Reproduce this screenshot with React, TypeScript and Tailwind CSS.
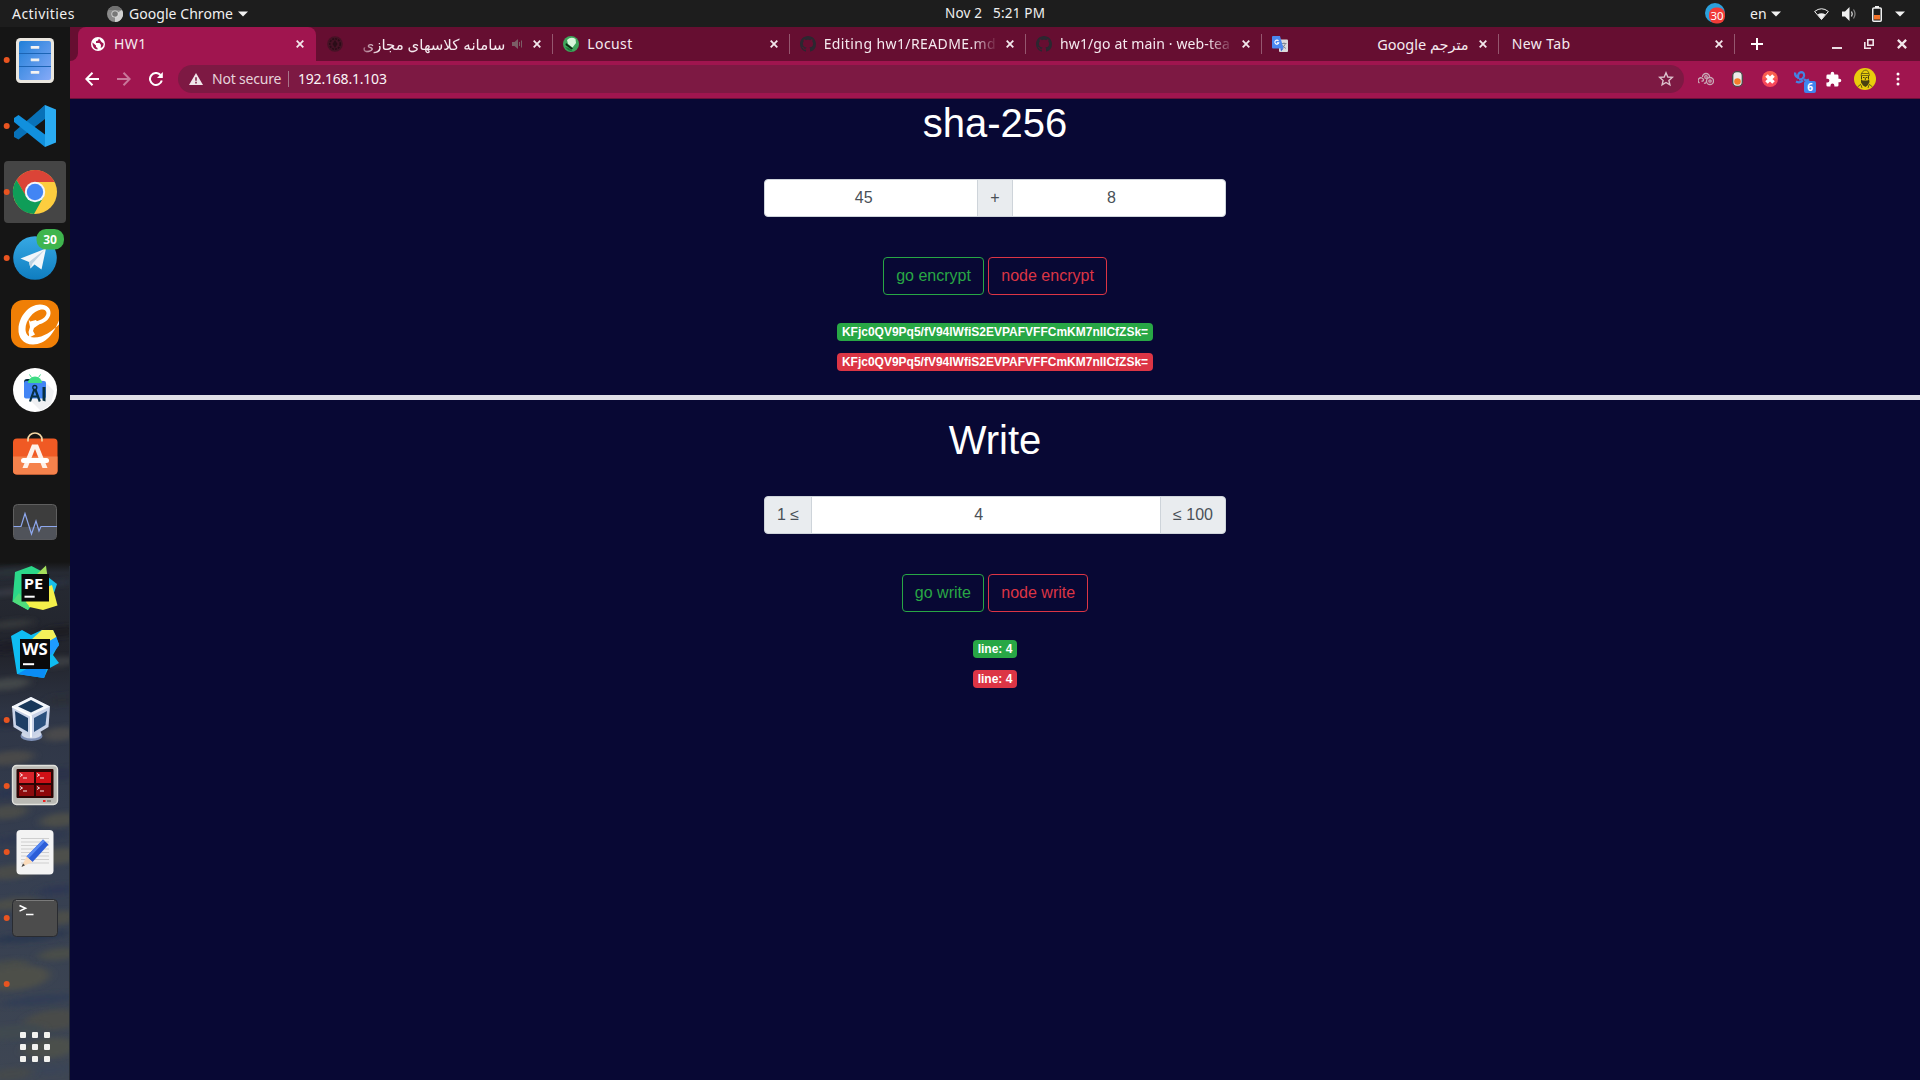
import React from "react";

const UI = "font-['Noto_Sans','DejaVu_Sans',sans-serif]";

/* ---------- shared glyphs ---------- */

function Caret({ className = "" }: { className?: string }) {
  return (
    <svg className={`block shrink-0 ${className}`} width="10" height="6" viewBox="0 0 10 6">
      <path d="M0 .5h10L5 5.5z" fill="#f2f2f2" />
    </svg>
  );
}

function Cross({ size = 8, className = "" }: { size?: number; className?: string }) {
  return (
    <svg className={`block shrink-0 ${className}`} width={size} height={size} viewBox="0 0 8 8">
      <path d="M.7.7l6.600 6.600M7.300.7L.7 7.300" stroke="#f3e7ec" strokeWidth="1.8" fill="none" />
    </svg>
  );
}

/* ---------- top bar ---------- */

function TopBar() {
  return (
    <header className={`flex h-[27px] w-full shrink-0 items-center bg-[#1d1d1d] text-[14px] leading-[27px] text-[#f0f0f0] ${UI}`}>
      <div className="flex w-[640px] items-center pl-3">
        <span className="w-[95px] whitespace-nowrap tracking-[0.45px]">Activities</span>
        <svg className="block" width="16" height="16" viewBox="0 0 16 16">
          <circle cx="8" cy="8" r="8" fill="#8a8a8a" />
          <path d="M8 8l7-4a8 8 0 01-7 12z" fill="#d0d0d0" />
          <path d="M1.2 4A8 8 0 0115 4H8z" fill="#6f6f6f" />
          <circle cx="8" cy="8" r="3.6" fill="#dcdcdc" />
          <circle cx="8" cy="8" r="2.8" fill="#777" />
        </svg>
        <span className="ml-1.5 w-[109px] whitespace-nowrap tracking-[0.05px]">Google Chrome</span>
        <Caret />
      </div>
      <div className="flex w-[710px] justify-center text-[13.5px]">
        <span className="w-[48px] whitespace-nowrap tracking-[0.15px]">Nov 2</span>
        <span className="w-[52px] whitespace-nowrap tracking-[0.2px]">5:21 PM</span>
      </div>
      <div className="flex flex-1 items-center pl-[355px]">
        <svg className="block" width="20" height="22" viewBox="0 0 20 22">
          <circle cx="10" cy="10" r="10" fill="#2ba0dc" />
          <rect x="4" y="4.500" width="16" height="16" rx="7" fill="#f13b37" />
          <text x="12" y="16.500" textAnchor="middle" fontSize="11.500" fill="#fff" fontFamily="Noto Sans">30</text>
        </svg>
        <span className="ml-[25px] w-[21px]">en</span>
        <Caret />
        <svg className="ml-[33px] block" width="15" height="12" viewBox="0 0 15 12">
          <path d="M.6 3.500Q7.500-2 14.400 3.500L7.500 11.500z" fill="none" stroke="#eee" strokeWidth="1" />
          <path d="M3.500 6.500Q7.500 4 11.500 6.500L7.500 11.500z" fill="#eee" />
        </svg>
        <svg className="ml-[13px] block" width="15" height="14" viewBox="0 0 15 14">
          <path d="M0 4.500h3L7.500 0v14L3 9.500H0z" fill="#f0f0f0" />
          <path d="M9.500 4.500q1.500 2.500 0 5" stroke="#e0e0e0" strokeWidth="1.300" fill="none" />
          <path d="M11.500 2.500q3 4.500 0 9" stroke="#888" strokeWidth="1.200" fill="none" />
        </svg>
        <svg className="ml-[15px] block" width="10" height="16" viewBox="0 0 10 16">
          <path d="M3 0h4v2H3z" fill="#f0f0f0" />
          <rect x=".75" y="2" width="8.500" height="13.250" rx="1" fill="none" stroke="#f0f0f0" strokeWidth="1.500" />
          <path d="M2 9h6v4.500H2z" fill="#f37329" />
        </svg>
        <Caret className="ml-[13px]" />
      </div>
    </header>
  );
}

/* ---------- dock ---------- */

function FilesIcon() {
  return (
    <>
      <rect x="16" y="11" width="38" height="45" rx="4.500" fill="#e9e6df" />
      <rect x="19" y="14" width="32" height="39" rx="2" fill="url(#drawer)" />
      <path d="M19 26.500h32M19 39.500h32" stroke="#1c64b4" strokeWidth="1.200" />
      {[19, 31.5, 44].map((y) => (
        <path key={y} d={`M31 ${y}v2.500h8v-2.500`} fill="#f4f4f4" stroke="#e8e8e8" strokeWidth=".6" />
      ))}
    </>
  );
}

function CodeIcon() {
  return (
    <>
      <path d="M14.500 42.500L45 12v12L18.500 45.500z" fill="#0a6cb4" />
      <path d="M14 39v5l4.500 2.500L45 26V12z" fill="#0871b8" />
      <path d="M18.500 22L14 25v4l31 25V41.500z" fill="#1190dd" />
      <path d="M45 12l11 4.500v33L45 54z" fill="#2aabf2" />
    </>
  );
}

function ChromeIcon() {
  return (
    <>
      <rect x="4" y="2" width="62" height="62" rx="4" fill="#454545" />
      <circle cx="35" cy="33" r="22" fill="#fdcd3f" />
      <path d="M16.500 21A22 22 0 0154.500 23H35L26 37.500z" fill="#db4437" />
      <path d="M16.500 21A22 22 0 0034 55L43.500 38 26.500 38z" fill="#0f9d58" />
      <circle cx="35" cy="33" r="10.200" fill="#f4f6fa" />
      <circle cx="35" cy="33" r="8.200" fill="#4285f4" />
    </>
  );
}

function TelegramIcon() {
  return (
    <>
      <circle cx="35" cy="33" r="21.800" fill="url(#tele)" />
      <path d="M20.500 33.500L46 23.500 41.500 44.500 34.500 39.500 30.500 43.500 29 37z" fill="#f2f6fa" />
      <path d="M29 37L45 24.500 32.500 38.500 30.500 43.500z" fill="#bfd3e2" />
      <rect x="36.500" y="4" width="27.500" height="20.500" rx="9.500" fill="#3fb54e" />
      <text x="50" y="18.500" textAnchor="middle" fontSize="12" fontWeight="700" fill="#fff" fontFamily="Open Sans">30</text>
    </>
  );
}

function EitaaIcon() {
  return (
    <>
      <rect x="11" y="9" width="48" height="48" rx="12" fill="#f07f06" />
      <path
        d="M59 29.500C54 42 46 53.500 33 53.500 23 53.500 18 46 18.500 38 19 25 29 13.500 40 13.500c7 0 11 4 10.500 9C50 28.500 44 32.500 37 34l-1-3.500c6-1.500 10-4.500 10.500-8 .3-3-2.500-4.500-5.500-4-8 1.500-15.500 11-15.500 19.500 0 5 3 8.500 8.500 8.500C44 46.500 52 40 59 33.500z"
        fill="#fff"
      />
      <path d="M28.500 28l1.500 2.500 6-1.500 3 4.500-5 3.500-1 3 2 3.500-6.500 3.500q1-4 0-6l1.500-5z" fill="#fff" />
    </>
  );
}

function StudioIcon() {
  return (
    <>
      <circle cx="35" cy="33" r="22" fill="#fff" />
      <path d="M42 22l12 12-3 13-10 7-12-12z" fill="#e8eaed" opacity=".7" />
      <path d="M24 25q0-3 3-3h6v4h-9z" fill="#073042" />
      <rect x="24" y="24" width="22" height="17.500" rx="2" fill="#4285f4" />
      <path d="M28 26a7 6.500 0 0114 0z" fill="#3ddc84" />
      <path d="M29.500 17.500l2 3M40.500 17.500l-2 3" stroke="#3ddc84" strokeWidth="1" />
      <path d="M34.800 31L30 44.500M34.800 31l5 13.500M31 39.500h8" stroke="#073042" strokeWidth="2.200" fill="none" />
      <circle cx="34.800" cy="30.500" r="2" fill="#4285f4" stroke="#073042" strokeWidth="1.300" />
      <path d="M42.500 30h3v14.500l-3-1z" fill="#073042" />
    </>
  );
}

function SoftwareIcon() {
  return (
    <>
      <rect x="13" y="15.500" width="44.500" height="36" rx="4" fill="#f05a24" />
      <path d="M13 33.500h44.500V47.500a4 4 0 01-4 4H17a4 4 0 01-4-4z" fill="#f5824c" />
      <path d="M28 18.500v-2a7 6.500 0 0114 0v2" fill="none" stroke="#f6d7a4" strokeWidth="1.700" />
      <path d="M32 21.500h6l9.500 23.500h-5L35 26 27.500 45h-5z" fill="#fdf1ea" />
      <rect x="21" y="35" width="28" height="5" rx="2.500" fill="#fff" />
    </>
  );
}

function MonitorIcon() {
  return (
    <>
      <rect x="13.500" y="15.500" width="43" height="35" rx="4" fill="#3d3d3d" stroke="#5f5f5f" />
      <path d="M14 38h42v9.500q0 3-3 3H17q-3 0-3-3z" fill="#50535a" />
      <path d="M13.500 37.500H21L25 24.500 31.500 45 36 32l3 10 2-4.500h16" fill="none" stroke="#8ea8ee" strokeWidth="1.200" />
    </>
  );
}

interface BrandProps {
  label: string;
  x: number;
  y: number;
  size: number;
  textWidth: number;
}

function BrandSquare({ label, x, y, size, textWidth }: BrandProps) {
  return (
    <>
      <rect x={x} y={y} width={size} height={size} fill="#0a0a0a" />
      <text x={x + 2.2} y={34} fontSize={size * 0.53} fontWeight="700" fill="#fff" fontFamily="Open Sans" textLength={textWidth} lengthAdjust="spacingAndGlyphs">
        {label}
      </text>
      <path d={`M${x + 3} ${y + size - 4.8}h${size * 0.37}`} stroke="#fff" strokeWidth="2" />
    </>
  );
}

function PycharmIcon() {
  return (
    <>
      <path d="M15 17L31.500 11 43 17 40 40 28 55 12.500 46.500z" fill="#2bd889" />
      <path d="M36 20L46 10.500 47.500 22 40 26z" fill="#a4e05c" />
      <path d="M48 22l9 7-4 12-6-4z" fill="#17bfe8" />
      <path d="M25 47l22-15 5-2 5.500 20.500L43 55 25 51z" fill="#f4f04a" />
      <path d="M12.500 46.500L19 38l10 13-1 4z" fill="#4fdc7c" />
      <BrandSquare label="PE" x={21.5} y={19} size={27.5} textWidth={19.5} />
    </>
  );
}

function WebstormIcon() {
  return (
    <>
      <path d="M11 15L22 9l9 5 11-5h11l6 14-6 11 6 8-11 6-4 9-27-4z" fill="#0fbdf2" />
      <path d="M31 19l11-10h11l3.500 7-10 6z" fill="#f3f05a" />
      <path d="M46 22l10.500-6 2.500 8.500-8 9.500-4-2z" fill="#1e9bff" />
      <path d="M17.500 53L30 46l18-2-4 13z" fill="#0a8cf5" />
      <BrandSquare label="WS" x={20} y={18} size={30} textWidth={25.5} />
    </>
  );
}

function VboxIcon() {
  return (
    <>
      <ellipse cx="31.500" cy="49" rx="11" ry="5" fill="#7f91b8" />
      <ellipse cx="31.500" cy="47" rx="10" ry="4.500" fill="#cfd7e8" />
      <path d="M31 10L50 19.500 48.500 40 31 50.500 13.500 40 12 19.500z" fill="#c9d3e8" />
      <path d="M31 10L50 19.500 31 28.500 12 19.500z" fill="#f2f5fa" />
      <path d="M31 13L43.500 19.500 31 25.500 18 19.500z" fill="#17375a" />
      <path d="M15 24l13 7v14l-12-7z" fill="#1d3e66" />
      <path d="M47 24l-13 7v14l11.500-7z" fill="#2b507c" />
      <path d="M31 28.500v22M12 19.500l19 9.500" stroke="#fff" strokeWidth="1.800" fill="none" />
    </>
  );
}

function TerminatorIcon() {
  const panes: [number, number, string][] = [
    [19, 19, "#d8232a"],
    [36, 19, "#cf1016"],
    [19, 32, "#8d0b0e"],
    [36, 32, "#8d0709"],
  ];
  return (
    <>
      <rect x="12.500" y="12.500" width="45" height="39" rx="4" fill="#b9b9b4" stroke="#e1e1dc" strokeWidth="1.400" />
      <rect x="16.500" y="16" width="37" height="29" rx="1" fill="#2b0505" />
      {panes.map(([x, y, c]) => (
        <g key={`${x}-${y}`}>
          <rect x={x} y={y} width="15" height="11" fill={c} />
          <path d={`M${x + 1} ${y + 1.5}l2.500 1.500-2.500 1.500M${x + 4} ${y + 6}h4`} stroke="#fff" strokeWidth=".9" fill="none" />
        </g>
      ))}
      <rect x="43" y="47" width="2.500" height="2" fill="#f02020" />
      <rect x="47" y="47" width="4" height="2" fill="#858580" />
    </>
  );
}

function EditorIcon() {
  return (
    <>
      <rect x="16.500" y="11" width="37" height="44.500" rx="4" fill="#f3f3f3" />
      <path d="M21 19.500h28M21 23h28M21 26.500h28M21 30h28M21 33.500h28M21 37h28M21 40.500h28M21 44h28" stroke="#cfcfcf" strokeWidth="1" />
      <path d="M43 20.500l5.500 5L32.500 43l-6-5.500z" fill="#2c5ed8" />
      <path d="M43 20.500l2 1.800L28.500 39.500l-2-2z" fill="#5587f2" />
      <path d="M26.500 37.500l6 5.500L21.500 48z" fill="#fbdcbc" />
      <path d="M23 44.500l2 1.800-3.500 1.700z" fill="#444" />
    </>
  );
}

function TerminalIcon() {
  return (
    <>
      <rect x="12.500" y="14.500" width="45" height="37" rx="4" fill="#4c4c4c" stroke="#292b30" />
      <path d="M16 15.500h38" stroke="#7a7a7a" strokeWidth="1" />
      <path d="M19.500 20.500l6 2.800-6 2.800M26 29.500h7.500" stroke="#fff" strokeWidth="1.600" fill="none" />
    </>
  );
}

const DOCK: { name: string; running: boolean; art: React.ReactNode }[] = [
  { name: "files", running: true, art: <FilesIcon /> },
  { name: "code", running: true, art: <CodeIcon /> },
  { name: "chrome", running: true, art: <ChromeIcon /> },
  { name: "telegram", running: true, art: <TelegramIcon /> },
  { name: "eitaa", running: false, art: <EitaaIcon /> },
  { name: "studio", running: false, art: <StudioIcon /> },
  { name: "software", running: false, art: <SoftwareIcon /> },
  { name: "monitor", running: false, art: <MonitorIcon /> },
  { name: "pycharm", running: false, art: <PycharmIcon /> },
  { name: "webstorm", running: false, art: <WebstormIcon /> },
  { name: "vbox", running: true, art: <VboxIcon /> },
  { name: "terminator", running: true, art: <TerminatorIcon /> },
  { name: "editor", running: true, art: <EditorIcon /> },
  { name: "terminal", running: true, art: <TerminalIcon /> },
  { name: "blank", running: true, art: null },
];

/* streaks of the wallpaper that show through the translucent dock: x, y, rx, ry, colour */
const STREAKS: [number, number, number, number, string][] = [
  [10, 10, 30, 4, "#2b3038"], [10, 30, 30, 3, "#373b44"], [50, 22, 26, 3, "#2c3040"], [12, 62, 22, 4, "#35383a"],
  [60, 70, 20, 6, "#1c1e24"], [20, 84, 34, 6, "#1b1e26"], [58, 100, 20, 5, "#3a3e42"], [8, 122, 22, 6, "#434649"],
  [62, 138, 16, 5, "#292d39"], [12, 160, 20, 5, "#252b3c"], [60, 172, 18, 7, "#484a4b"], [10, 196, 24, 7, "#484a4a"],
  [62, 212, 18, 6, "#29324a"], [20, 230, 30, 5, "#2c3650"], [8, 250, 20, 7, "#4a4b49"], [60, 258, 20, 7, "#4c4e4a"],
  [30, 276, 40, 5, "#2e3850"], [60, 294, 22, 8, "#4e504b"], [12, 310, 26, 7, "#484b48"], [58, 328, 20, 5, "#2d3852"],
  [14, 342, 26, 6, "#4c4e49"], [58, 356, 22, 7, "#4b4e4a"], [30, 375, 40, 5, "#2c3750"], [60, 392, 22, 6, "#4a4d4a"],
  [8, 404, 22, 6, "#474b49"], [16, 416, 34, 12, "#4d4f4a"], [40, 438, 40, 5, "#333e54"], [54, 458, 30, 10, "#494c4a"],
  [14, 470, 30, 7, "#414950"], [50, 486, 28, 10, "#4c4f4b"], [50, 508, 30, 5, "#3a4457"], [12, 512, 22, 6, "#454a4c"],
];

function Dock() {
  return (
    <aside className="relative flex h-full w-[70px] shrink-0 flex-col bg-[#151515]">
      <svg className="absolute bottom-0 left-0" width="70" height="518" viewBox="0 0 70 518">
        <defs>
          <linearGradient id="sea" x1="0" y1="0" x2="0" y2="1">
            <stop offset="0" stopColor="#151515" />
            <stop offset=".02" stopColor="#262a33" />
            <stop offset=".18" stopColor="#22242c" />
            <stop offset=".3" stopColor="#2f3646" />
            <stop offset=".6" stopColor="#363f51" />
            <stop offset="1" stopColor="#3e4653" />
          </linearGradient>
          <linearGradient id="drawer" x1="0" y1="0" x2="1" y2="1">
            <stop offset="0" stopColor="#1f7fd8" />
            <stop offset="1" stopColor="#86aaf8" />
          </linearGradient>
          <linearGradient id="tele" x1="0" y1="0" x2="0" y2="1">
            <stop offset="0" stopColor="#37a9e4" />
            <stop offset="1" stopColor="#0f7dc0" />
          </linearGradient>
          <filter id="soft" x="-30%" y="-80%" width="160%" height="260%">
            <feGaussianBlur stdDeviation="5 2.500" />
          </filter>
        </defs>
        <rect width="70" height="518" fill="url(#sea)" />
        {STREAKS.map(([x, y, rx, ry, c], i) => (
          <ellipse key={i} cx={x} cy={y} rx={rx} ry={ry} fill={c} filter="url(#soft)" transform={`rotate(-6 ${x} ${y})`} />
        ))}
        <path d="M69.500 4v514" stroke="#252b36" />
      </svg>
      {DOCK.map((item) => (
        <svg key={item.name} className="relative block shrink-0" width="70" height="66" viewBox="0 0 70 66">
          {item.art}
          {item.running && <circle cx="6.700" cy="33" r="3" fill="#e95420" />}
        </svg>
      ))}
      <div className="relative mt-[15px] ml-5 grid w-[30px] grid-cols-3 gap-1.5">
        {Array.from({ length: 9 }, (_, i) => (
          <i key={i} className="block size-1.5 rounded-[1px] bg-[#f2f2ef]" />
        ))}
      </div>
    </aside>
  );
}

/* ---------- browser chrome ---------- */

function Globe() {
  return (
    <svg width="14" height="14" viewBox="0 0 14 14">
      <circle cx="7" cy="7" r="7" fill="#fff" />
      <path d="M1.500 5.500l3.500 3v1.500l1.500 1v1.500Q2 12 1.500 7zM8 1.500L7 3.500l-2 .8v1.700h3.500L10 8l-.3 3q3-1.500 2.900-4.500L10.500 5z" fill="#a0154f" />
    </svg>
  );
}

function Seal() {
  return (
    <svg width="16" height="16" viewBox="0 0 16 16">
      <circle cx="8" cy="8" r="7.800" fill="#451225" />
      <circle cx="8" cy="8" r="5.200" fill="none" stroke="#2b0d18" strokeWidth="1.600" strokeDasharray="2 1" />
      <path d="M8 4l2.500 4L8 12 5.500 8z" fill="#2b0d18" />
    </svg>
  );
}

function LocustMark() {
  return (
    <svg width="16" height="16" viewBox="0 0 16 16">
      <circle cx="8" cy="8" r="8" fill="#3fa55b" />
      <path d="M4 4Q8 0 12.500 3l.5 4-3.500 4.500L5 8z" fill="#d9f7dc" />
      <path d="M3 7l7 5.500-1.500 1L2.500 9z" fill="#0b2713" />
      <path d="M2 11q3 4 8 4.500L6 12z" fill="#1c7a3c" />
    </svg>
  );
}

function Octocat() {
  return (
    <svg width="16" height="16" viewBox="0 0 16 16">
      <path
        fill="#2b2730"
        d="M8 0C3.580 0 0 3.580 0 8c0 3.540 2.290 6.530 5.470 7.590.4.070.55-.17.55-.38 0-.19-.01-.82-.01-1.490-2.010.37-2.530-.49-2.690-.94-.09-.23-.48-.94-.82-1.130-.28-.15-.68-.52-.01-.53.63-.01 1.080.58 1.230.82.72 1.210 1.870.87 2.330.66.070-.52.280-.87.510-1.070-1.780-.2-3.640-.89-3.640-3.950 0-.87.310-1.590.820-2.150-.08-.2-.36-1.020.080-2.120 0 0 .67-.21 2.200.82.64-.18 1.320-.27 2-.27s1.360.09 2 .27c1.530-1.040 2.200-.82 2.200-.82.440 1.100.160 1.920.080 2.120.510.560.820 1.270.820 2.150 0 3.070-1.870 3.750-3.650 3.950.290.250.540.730.540 1.480 0 1.070-.01 1.930-.01 2.200 0 .21.15.46.55.38A8.010 8.010 0 0016 8c0-4.420-3.580-8-8-8z"
      />
    </svg>
  );
}

function TranslateMark() {
  return (
    <svg width="16" height="16" viewBox="0 0 16 16">
      <rect x="7" y="3.500" width="9" height="12.500" rx="1" fill="#dcdcdc" />
      <path d="M9.500 7.500h5M12 6.500v1M13.500 7.500q-1 3.500-4 5M10.500 9q1 2.500 3.500 3.500" stroke="#7b8590" strokeWidth=".9" fill="none" />
      <path d="M1 0h7l3.500 12.500H1a1 1 0 01-1-1V1a1 1 0 011-1z" fill="#4a88f0" />
      <path d="M6.500 5a2 2 0 10.300 1.700H5" stroke="#fff" strokeWidth="1.100" fill="none" />
      <path d="M8.500 12.500h3L9 15.500z" fill="#3367d6" />
    </svg>
  );
}

interface TabProps {
  title: string;
  icon?: React.ReactNode;
  active?: boolean;
  rtl?: boolean;
  fade?: "left" | "right";
  muted?: boolean;
  text?: string;
}

function Tab({ title, icon, active, rtl, fade, muted, text = "tracking-[0.4px]" }: TabProps) {
  return (
    <div
      className={`relative flex h-full shrink-0 items-center pr-3 ${
        active ? "mr-px w-[238px] rounded-t-lg bg-[#a0154f] pl-[13px]" : "w-[236.33px] pl-[10px]"
      }`}
    >
      {icon && <span className={`flex w-4 shrink-0 ${active ? "mr-[7px]" : "mr-2"}`}>{icon}</span>}
      <span
        dir={rtl ? "rtl" : "ltr"}
        className={`min-w-0 flex-1 whitespace-nowrap ${icon ? "" : "pl-[3px]"} ${text} ${
          fade === "left"
            ? "[mask-image:linear-gradient(to_right,transparent,black_28px)]"
            : fade === "right"
              ? "[mask-image:linear-gradient(to_left,transparent,black_26px)]"
              : ""
        }`}
      >
        {title}
      </span>
      {muted && (
        <svg className="ml-[7px] block shrink-0" width="11" height="10" viewBox="0 0 11 10">
          <path d="M0 3h2.500L6 0v10L2.500 7H0z" fill="#7b5e66" />
          <path d="M7.500 3v4M9.500 1.500v7" stroke="#7b5e66" strokeWidth="1" />
        </svg>
      )}
      <Cross className={rtl ? "ml-2.5" : "ml-2"} />
      {!active && <i className="absolute top-[7px] right-0 block h-5 w-px bg-[#95576f]" />}
    </div>
  );
}

function TabStrip() {
  return (
    <div className={`flex h-[34px] w-full shrink-0 bg-[#660e31] text-[14px] leading-[20px] text-[#f5eaef] ${UI}`}>
      <div className="flex w-2 shrink-0 items-end">
        <i className="block h-2 w-2 bg-[#a0154f]">
          <i className="block h-2 w-2 rounded-br-lg bg-[#660e31]" />
        </i>
      </div>
      <Tab title="HW1" icon={<Globe />} active />
      <Tab title="سامانه کلاسهای مجازی" icon={<Seal />} rtl fade="left" muted text="text-[15px]" />
      <Tab title="Locust" icon={<LocustMark />} />
      <Tab title="Editing hw1/README.md" icon={<Octocat />} fade="right" />
      <Tab title="hw1/go at main · web-tea" icon={<Octocat />} fade="right" text="tracking-[0.12px]" />
      <Tab title="مترجم Google" icon={<TranslateMark />} rtl text="text-[14.5px]" />
      <Tab title="New Tab" />
      <div className="flex flex-1 items-center pl-[16px]">
        <svg className="block" width="12" height="12" viewBox="0 0 12 12">
          <path d="M6 0v12M0 6h12" stroke="#fff" strokeWidth="2" />
        </svg>
        <svg className="ml-[69px] block" width="10" height="12" viewBox="0 0 10 12">
          <path d="M0 10h10" stroke="#eadde3" strokeWidth="2" />
        </svg>
        <svg className="ml-[22px] block" width="10" height="10" viewBox="0 0 10 10">
          <path d="M3.800.8h5.400v5.400H3.800z" fill="none" stroke="#f0e4e9" strokeWidth="1.600" />
          <path d="M.8 3v6.200H7" fill="none" stroke="#f0e4e9" strokeWidth="1.600" />
        </svg>
        <Cross size={10} className="ml-[23px]" />
      </div>
    </div>
  );
}

function Extensions() {
  return (
    <div className="flex items-center">
      <svg className="ml-[14px] block" width="16" height="14" viewBox="0 0 16 14">
        <g fill="none" stroke="#c9a9b6" strokeWidth="1.300">
          <path d="M1.500 11a2.800 2.800 0 114-3.500q0 2-2 1.500" />
          <path d="M4.500 5a3.500 3.500 0 117 0" />
          <circle cx="8" cy="5" r="1.300" />
          <circle cx="12" cy="9" r="3.500" />
          <circle cx="12" cy="9" r="1.200" />
          <path d="M6 11q2 1 2.500-2" />
        </g>
      </svg>
      <svg className="ml-[18px] block" width="11" height="16" viewBox="0 0 11 16">
        <rect x=".7" y=".7" width="9.600" height="14.600" rx="4" fill="#ececea" stroke="#4a4a48" strokeWidth="1.300" />
        <circle cx="5.500" cy="10.500" r="3.300" fill="#f57c2b" />
      </svg>
      <svg className="ml-[19px] block" width="16" height="16" viewBox="0 0 16 16">
        <circle cx="8" cy="8" r="8" fill="#f8485a" />
        <path d="M1 4.500A8 8 0 0115 4.500V8H1z" fill="#fb6a48" opacity=".7" />
        <path d="M4.500 4.500l7 7M11.500 4.500l-7 7" stroke="#fff" strokeWidth="3.600" />
      </svg>
      <div className="relative ml-4 h-4 w-4">
        <svg className="block" width="16" height="14" viewBox="0 0 16 14">
          <path d="M4.500 6.500Q.5 5.500 1.200 1.500M4.500 8Q3 2 7 1.200q3.500 0 3 4Q9 8.500 5 8.500M2 10.500q4 2 7-1M10 8q2 2.500 5 .5" fill="none" stroke="#4384e4" strokeWidth="2.200" />
        </svg>
        <span className={`absolute top-[10px] left-[10px] flex h-3 w-3 items-center justify-center rounded-[2px] bg-[#3f85ee] text-[10px] leading-3 font-bold text-white ${UI}`}>6</span>
      </div>
      <svg className="ml-[15px] block" width="17" height="17" viewBox="0 0 24 24">
        <path fill="#fff" d="M20.500 11H19V7a2 2 0 00-2-2h-4V3.500a2.500 2.500 0 00-5 0V5H4a2 2 0 00-2 2v3.800h1.500a2.700 2.700 0 010 5.400H2V20a2 2 0 002 2h3.800v-1.500a2.700 2.700 0 015.400 0V22H17a2 2 0 002-2v-4h1.500a2.500 2.500 0 000-5z" />
      </svg>
      <svg className="ml-[12px] block" width="22" height="22" viewBox="0 0 22 22">
        <circle cx="11" cy="11" r="11" fill="#e8cd0c" />
        <path d="M7 7.500Q8 2 12.500 2q2.500 1.500 3 5.500zM7 5.500h8" fill="none" stroke="#6b6010" strokeWidth=".9" />
        <path d="M7.500 8v3M14.500 8v3M9 9.500h1.500M12 9.500h1.500M11.300 9.500v2.500" stroke="#4a4210" strokeWidth="1" />
        <path d="M7 11l1.500 1.500h5L15 11l.5 3-1.500 3-2.500 2-2.500-1.500L7 14.500z" fill="#4a4210" />
        <path d="M3.500 19l3.500-3M18.500 19l-3.500-3M8 20l-1-3M14 20l1-3" stroke="#6b6010" strokeWidth="1" />
      </svg>
      <svg className="ml-5 block" width="4" height="14" viewBox="0 0 4 14">
        <circle cx="2" cy="2" r="1.500" fill="#fff" />
        <circle cx="2" cy="7" r="1.500" fill="#fff" />
        <circle cx="2" cy="12" r="1.500" fill="#fff" />
      </svg>
    </div>
  );
}

function Toolbar() {
  return (
    <div className={`flex h-[38px] w-full shrink-0 items-center border-b border-[#6b1038] bg-[#a0154f] pb-px pl-[15px] ${UI}`}>
      <svg className="block" width="14" height="14" viewBox="0 0 14 14">
        <path d="M14 7H1.500M7.500.8L1.300 7l6.200 6.200" fill="none" stroke="#fff" strokeWidth="2" />
      </svg>
      <svg className="ml-[18px] block" width="14" height="14" viewBox="0 0 14 14">
        <path d="M0 7h12.500M6.500.8L12.700 7l-6.200 6.200" fill="none" stroke="#c9779a" strokeWidth="2" />
      </svg>
      <svg className="ml-[18px] block" width="14" height="14" viewBox="0 0 14 14">
        <path d="M11.500 3A6 6 0 1012.800 8.500" fill="none" stroke="#fff" strokeWidth="2" />
        <path d="M13.800 0v6H8z" fill="#fff" />
      </svg>
      <div className="ml-[15px] flex h-7 w-[1506px] items-center rounded-full bg-[#7d1943] pr-[10px] pl-[11px] text-[14px] leading-7">
        <svg className="block" width="14" height="12" viewBox="0 0 14 12">
          <path d="M7 0l7 12H0z" fill="#f1e6ea" />
          <path d="M7 4.200v3.600M7 8.800v1.600" stroke="#7d1943" strokeWidth="1.500" />
        </svg>
        <span className="ml-[9px] w-[76px] whitespace-nowrap text-[#e6d3da] tracking-[-0.2px]">Not secure</span>
        <i className="block h-4 w-px bg-[#a8748a]" />
        <span className="ml-[9px] flex-1 whitespace-nowrap text-[#fbf5f7] tracking-[-0.2px]">192.168.1.103</span>
        <svg className="block" width="16" height="16" viewBox="0 0 16 16">
          <path d="M8 1.800l1.800 4.200 4.500.4-3.400 3 1 4.400L8 11.500l-3.900 2.300 1-4.400-3.400-3 4.500-.4z" fill="none" stroke="#dcc3cd" strokeWidth="1.400" />
        </svg>
      </div>
      <Extensions />
    </div>
  );
}

/* ---------- page ---------- */

const ADDON = "flex items-center justify-center border border-[#ced4da] bg-[#e9ecef] px-3 text-[#495057]";
const FIELD = "min-w-0 border border-[#ced4da] bg-white py-1.5 pr-[27px] pl-3 text-center text-[#495057] outline-none";

function Heading({ children }: { children: string }) {
  return <h1 className="mb-8 text-[40px] leading-[48px] font-normal text-white">{children}</h1>;
}

function Actions({ left, right }: { left: string; right: string }) {
  return (
    <div className="mt-10 flex gap-[4.45px]">
      <button className="h-[38px] rounded border border-[#28a745] px-3 text-[#28a745]">{left}</button>
      <button className="h-[38px] rounded border border-[#dc3545] px-3 text-[#dc3545]">{right}</button>
    </div>
  );
}

function Results({ value }: { value: string }) {
  return (
    <div className="mt-7 flex flex-col items-center gap-3 text-[12px] leading-3 font-bold text-white">
      <span className="h-[18px] rounded bg-[#28a745] px-[4.8px] py-[3px] whitespace-nowrap">{value}</span>
      <span className="h-[18px] rounded bg-[#dc3545] px-[4.8px] py-[3px] whitespace-nowrap">{value}</span>
    </div>
  );
}

function Page() {
  return (
    <main className="flex w-full flex-1 flex-col items-center bg-[#080834] font-['Liberation_Sans',Arial,sans-serif] text-[16px] leading-6">
      <Heading>sha-256</Heading>
      <div className="flex h-[38px] w-[462px]">
        <input className={`${FIELD} flex-1 rounded-l`} defaultValue="45" />
        <span className={`${ADDON} -mx-px`}>+</span>
        <input className={`${FIELD} flex-1 rounded-r`} defaultValue="8" />
      </div>
      <Actions left="go encrypt" right="node encrypt" />
      <Results value="KFjc0QV9Pq5/fV94lWfiS2EVPAFVFFCmKM7nlICfZSk=" />
      <hr className="mt-6 mb-4 h-[5px] w-full border-0 bg-[#e0dfe6]" />
      <Heading>Write</Heading>
      <div className="flex h-[38px] w-[462px]">
        <span className={`${ADDON} rounded-l`}>1 ≤</span>
        <input className={`${FIELD} -mx-px flex-1`} defaultValue="4" />
        <span className={`${ADDON} rounded-r`}>≤ 100</span>
      </div>
      <Actions left="go write" right="node write" />
      <Results value="line: 4" />
    </main>
  );
}

export default function App() {
  return (
    <div className="flex h-[1080px] w-[1920px] flex-col overflow-hidden bg-[#151515]">
      <TopBar />
      <div className="flex min-h-0 flex-1">
        <Dock />
        <section className="flex min-w-0 flex-1 flex-col">
          <TabStrip />
          <Toolbar />
          <Page />
        </section>
      </div>
    </div>
  );
}
